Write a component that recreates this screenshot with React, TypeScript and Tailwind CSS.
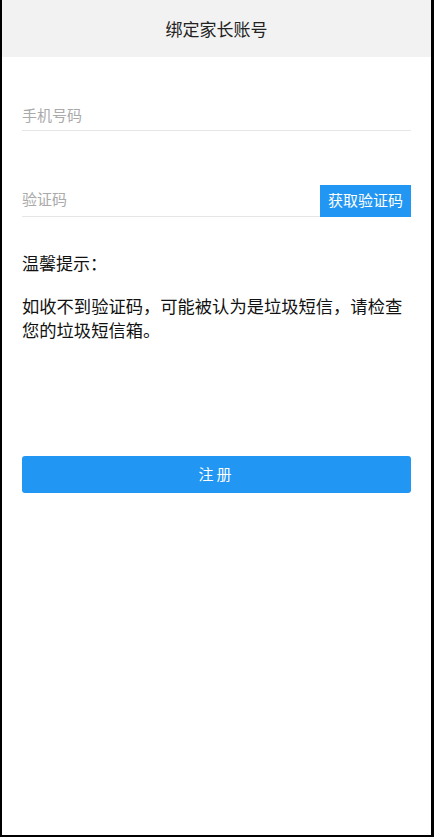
import React from "react";

export default function App() {
  const font = { fontFamily: '"Noto Sans CJK SC", "Noto Sans", sans-serif' };
  return (
    <div className="w-[434px] h-[837px] bg-black pl-[2px] pr-[3px] pb-[2px]" style={font}>
      <div className="h-full bg-white flex flex-col">
        <div className="h-[57px] bg-[#f2f2f2] flex items-center justify-center text-[17px] text-[#222]">
          绑定家长账号
        </div>
        <div className="px-[20px]">
          <div className="mt-[43px] h-[31px] border-b border-[#e6e6e6] flex items-center text-[15px] text-[#aaaaaa]">
            手机号码
          </div>
          <div className="mt-[54px] flex items-end">
            <div className="flex-1 h-[32px] border-b border-[#e6e6e6] flex items-center pb-[2px] text-[15px] text-[#aaaaaa]">
              验证码
            </div>
            <div className="w-[91px] h-[32px] bg-[#2196f3] text-white text-[15px] flex items-center justify-center pb-[1px]">
              获取验证码
            </div>
          </div>
          <div className="mt-[34px] text-[17px] text-[#111] leading-[24px]">温馨提示：</div>
          <div className="mt-[19px] text-[17.3px] text-[#111] leading-[24px]">
            如收不到验证码，可能被认为是垃圾短信，请检查您的垃圾短信箱。
          </div>
          <div className="mt-[114px] h-[37px] rounded-[3px] bg-[#2196f3] text-white text-[15px] tracking-[3px] flex items-center justify-center">
            注册
          </div>
        </div>
      </div>
    </div>
  );
}
